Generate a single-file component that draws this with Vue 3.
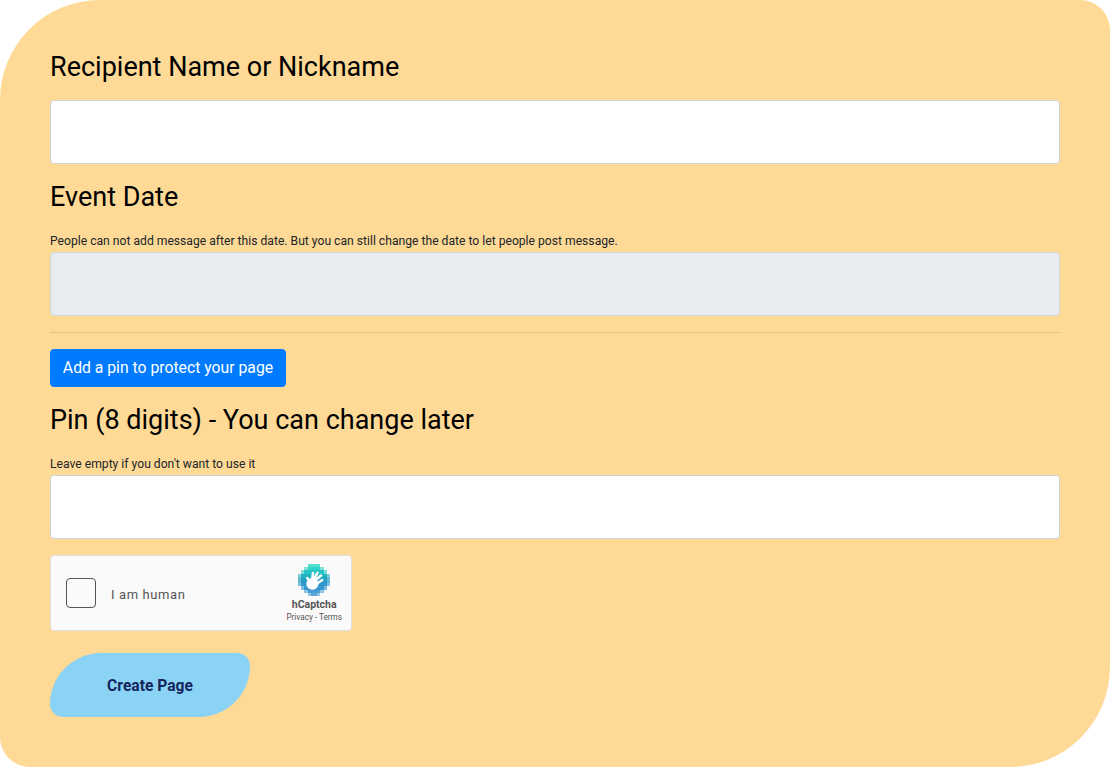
<script setup>
const rows = [
  [3, ['#4fe0d0', '#4fe0d0', '#4fe0d0', '#4fe0d0']],
  [2, ['#7fe3d8', '#30d5c8', '#30d5c8', '#30d5c8', '#30d5c8', '#7fe3d8']],
  [1, ['#7fdcd8', '#25c4c4', '#25c4c4', '#25c4c4', '#25c4c4', '#25c4c4', '#25c4c4', '#7fdcd8']],
  [0, ['#7fd3d8', '#20b5c0', '#20b5c0', '#20b5c0', '#20b5c0', '#20b5c0', '#20b5c0', '#20b5c0', '#20b5c0', '#7fd3d8']],
  [0, ['#60bfd0', '#1fa8bf', '#1fa8bf', '#1fa8bf', '#1fa8bf', '#1fa8bf', '#1fa8bf', '#1fa8bf', '#1fa8bf', '#60bfd0']],
  [0, ['#60b5d8', '#2a9cc8', '#2a9cc8', '#2a9cc8', '#2a9cc8', '#2a9cc8', '#2a9cc8', '#2a9cc8', '#2a9cc8', '#60b5d8']],
  [0, ['#80c0e0', '#3098cc', '#3098cc', '#3098cc', '#3098cc', '#3098cc', '#3098cc', '#3098cc', '#3098cc', '#80c0e0']],
  [1, ['#80bee0', '#3a98d0', '#3a98d0', '#3a98d0', '#3a98d0', '#3a98d0', '#3a98d0', '#80bee0']],
  [2, ['#90c6e6', '#4a9ed6', '#4a9ed6', '#4a9ed6', '#4a9ed6', '#90c6e6']],
  [3, ['#90c6e6', '#5aa6da', '#5aa6da', '#90c6e6']]
]
const cells = []
rows.forEach(([start, colors], y) => {
  colors.forEach((fill, i) => cells.push({ x: start + i, y, fill }))
})
const fingers = [
  [2.9, 4.4],
  [4.7, 2.8],
  [6.1, 2.8],
  [7.2, 3.6]
]
</script>

<template>
  <main class="card">
    <form class="form" @submit.prevent>
      <h3>Recipient Name or Nickname</h3>
      <input class="control" type="text" />

      <h3 class="after-control">Event Date</h3>
      <div class="hint"><small>People can not add message after this date. But you can still change the date to let people post message.</small></div>
      <input class="control" type="text" disabled />

      <hr />

      <button type="button" class="pin-btn">Add a pin to protect your page</button>

      <h3 class="after-control">Pin (8 digits) - You can change later</h3>
      <div class="hint"><small>Leave empty if you don't want to use it</small></div>
      <input class="control" type="text" />

      <div class="captcha">
        <span class="check"></span>
        <span class="human">I am human</span>
        <div class="brand">
          <svg class="logo" width="32" height="32" viewBox="0 0 10 10" aria-hidden="true">
            <rect v-for="c in cells" :key="c.x + '-' + c.y" :x="c.x" :y="c.y" width="1" height="1" :fill="c.fill" shape-rendering="crispEdges" />
            <ellipse cx="4.5" cy="6.2" rx="1.9" ry="1.85" fill="#fff" />
            <line v-for="(f, i) in fingers" :key="i" x1="4.3" y1="6" :x2="f[0]" :y2="f[1]" stroke="#fff" stroke-width="0.8" stroke-linecap="round" />
            <line x1="5" y1="6.7" x2="7.6" y2="5" stroke="#fff" stroke-width="0.8" stroke-linecap="round" />
          </svg>
          <span class="brand-name">hCaptcha</span>
          <span class="brand-links">Privacy - Terms</span>
        </div>
      </div>

      <button type="submit" class="create">Create Page</button>
    </form>
  </main>
</template>

<style>
html, body { margin: 0; background: #fff; }
</style>

<style scoped>
.card {
  box-sizing: border-box;
  width: 1110px;
  height: 767px;
  padding: 50px;
  background: #ffda96;
  border-radius: 100px 30px 100px 30px;
  font-family: Roboto, "Liberation Sans", sans-serif;
  font-size: 16px;
  line-height: 1.5;
  color: #212529;
}
.form { display: flex; flex-direction: column; align-items: flex-start; }
h3 {
  margin: 0 0 16px;
  padding-top: 1px;
  font-size: 27px;
  font-weight: 400;
  line-height: 32.6px;
  color: #000;
}
.after-control { margin-top: 16px; }
.hint { width: 100%; height: 22.4px; line-height: 22px; }
small { font-size: 12.15px; font-weight: 400; }
.control {
  box-sizing: border-box;
  display: block;
  width: 100%;
  height: 64px;
  padding: 6px 12px;
  background: #fff;
  border: 1px solid #ced4da;
  border-radius: 4px;
  font: inherit;
  outline: none;
}
.control:disabled { background: #e9ecef; }
hr {
  width: 100%;
  margin: 16px 0;
  border: 0;
  border-top: 1px solid rgba(0, 0, 0, 0.1);
}
.pin-btn {
  box-sizing: border-box;
  width: 236px;
  height: 38px;
  padding: 6px 0;
  background: #007bff;
  border: 1px solid #007bff;
  border-radius: 4px;
  color: #fff;
  font: inherit;
  font-size: 15.75px;
}
.captcha {
  box-sizing: border-box;
  display: flex;
  align-items: center;
  width: 302px;
  height: 76px;
  margin-top: 16px;
  padding: 0 9px 0 15px;
  background: #fafafa;
  border: 1px solid #e0e0e0;
  border-radius: 4px;
}
.check {
  box-sizing: border-box;
  flex: none;
  width: 30px;
  height: 30px;
  background: #fafafa;
  border: 1px solid #555;
  border-radius: 4px;
}
.human {
  margin-left: 15px;
  padding-top: 4px;
  font-size: 13px;
  letter-spacing: 0.6px;
  color: #555;
}
.brand {
  display: flex;
  flex-direction: column;
  align-items: center;
  margin-left: auto;
  padding-top: 2px;
}
.logo { display: block; }
.brand-name {
  margin-top: 2px;
  font-size: 10.5px;
  font-weight: 700;
  line-height: 14px;
  color: #555;
}
.brand-links {
  font-size: 8.2px;
  line-height: 11px;
  color: #555;
}
.create {
  width: 200px;
  height: 64px;
  margin-top: 22px;
  padding: 2px 0 0;
  background: #8bd3f5;
  border: 0;
  border-radius: 80px 20px 80px 20px;
  color: #14265c;
  font-family: Roboto, sans-serif;
  font-size: 15.6px;
  font-weight: 700;
}
</style>
